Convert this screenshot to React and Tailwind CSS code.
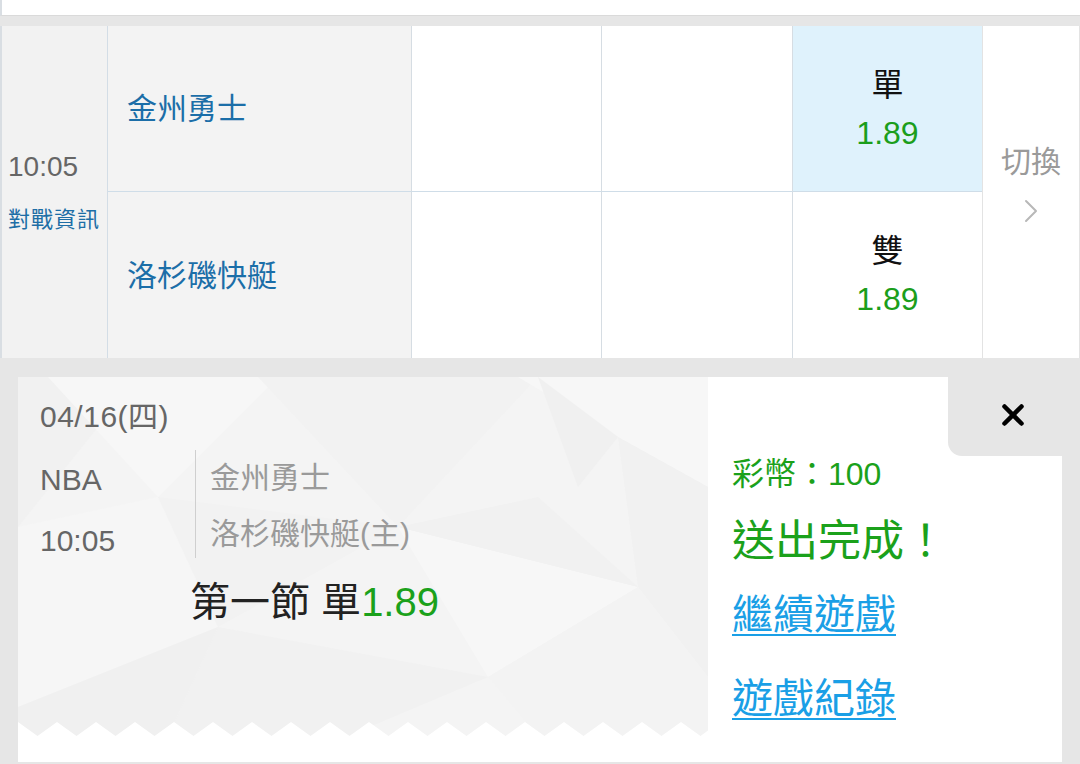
import { X } from 'lucide-react'

const FONT = { fontFamily: '"Liberation Sans", "Noto Sans CJK TC", sans-serif' }

// zigzag edge along the bottom of the ticket stub
function Zigzag({ width = 690, period = 39, depth = 14 }) {
  const pts = [`0,${depth}`]
  for (let x = 0; x <= width + period; x += period) {
    pts.push(`${x},0`)
    pts.push(`${x + period / 2},${depth}`)
  }
  pts.push(`${width + period},${depth}`)
  return (
    <svg width={width} height={depth} className="absolute left-0 bottom-0 block">
      <polygon points={pts.join(' ')} fill="#ffffff" />
    </svg>
  )
}

// faint low-poly facets behind the ticket text
function Facets() {
  return (
    <svg width="690" height="359" className="absolute inset-0 block">
      <rect width="690" height="359" fill="#f4f4f4" />
      <polygon points="0,0 120,0 0,150" fill="#f1f1f1" />
      <polygon points="30,0 260,0 140,120" fill="#f7f7f7" />
      <polygon points="240,0 520,0 380,150" fill="#f2f2f2" />
      <polygon points="500,0 690,0 690,110 600,60" fill="#f7f7f7" />
      <polygon points="520,0 600,60 560,110" fill="#f0f0f0" />
      <polygon points="600,60 690,110 690,300 620,210" fill="#f1f1f1" />
      <polygon points="0,150 140,120 200,250 0,330" fill="#f6f6f6" />
      <polygon points="140,120 380,150 200,250" fill="#f2f2f2" />
      <polygon points="380,150 620,210 470,300" fill="#f7f7f7" />
      <polygon points="200,250 470,300 330,359 150,359" fill="#f1f1f1" />
      <polygon points="470,300 620,210 690,300 690,359 520,359" fill="#f3f3f3" />
      <polygon points="0,330 200,250 150,359 0,359" fill="#f0f0f0" />
      <polygon points="380,150 520,120 620,210" fill="#f1f1f1" />
    </svg>
  )
}

function Cell({ className = '', children }) {
  return <div className={`flex flex-col items-center justify-center ${className}`}>{children}</div>
}

export default function App() {
  return (
    <div className="w-[1080px] h-[764px] overflow-hidden bg-[#e6e6e6]" style={FONT}>
      {/* previous card edge */}
      <div className="h-4 bg-white border-l-2 border-[#d9dee3] border-b border-b-[#dadada]" />
      <div className="h-[10px]" />

      {/* match row */}
      <div className="grid grid-cols-[108px_303px_190px_191px_190px_1fr] grid-rows-[166px_166px] bg-white">
        <div className="row-span-2 flex flex-col justify-center bg-[#f2f2f2] border-l-2 border-r border-l-[#d9dee3] border-r-[#d3dde6] pl-[6px]">
          <div className="text-[28px] leading-[36px] text-[#666]">10:05</div>
          <div className="text-[22px] leading-[30px] text-[#1d6ea6] mt-[20px] tracking-[1px]">對戰資訊</div>
        </div>
        <div className="flex items-center pl-[19px] bg-[#f3f3f3] border-b border-[#cfdde8] text-[30px] text-[#1b6ea8]">金州勇士</div>
        <div className="border-l border-b border-l-[#d6dde3] border-b-[#cfdde8]" />
        <div className="border-l border-b border-l-[#d6dde3] border-b-[#cfdde8]" />
        <Cell className="bg-[#dff2fc] border-l border-b border-l-[#d6dde3] border-b-[#cfdde8]">
          <div className="text-[32px] leading-[44px] text-[#111]">單</div>
          <div className="text-[32px] leading-[44px] text-[#1b9e1b] mt-[4px]">1.89</div>
        </Cell>
        <Cell className="row-span-2 border-l border-r border-[#e3e3e3] pb-[20px]">
          <div className="text-[30px] leading-[40px] text-[#9a9a9a]">切換</div>
          <svg width="14" height="24" viewBox="0 0 14 24" className="mt-[17px] block">
            <path d="M2 2 L12 12 L2 22" fill="none" stroke="#b8b8b8" strokeWidth="2" strokeLinecap="round" strokeLinejoin="round" />
          </svg>
        </Cell>
        <div className="flex items-center pl-[19px] bg-[#f3f3f3] text-[30px] text-[#1b6ea8]">洛杉磯快艇</div>
        <div className="border-l border-[#d6dde3]" />
        <div className="border-l border-[#d6dde3]" />
        <Cell className="border-l border-[#d6dde3]">
          <div className="text-[32px] leading-[44px] text-[#111]">雙</div>
          <div className="text-[32px] leading-[44px] text-[#1b9e1b] mt-[4px]">1.89</div>
        </Cell>
      </div>

      {/* bet slip */}
      <div className="mx-[18px] mt-[19px] h-[385px] flex">
        <div className="w-[690px] flex flex-col">
          <div className="relative h-[359px] overflow-hidden">
            <Facets />
            <div className="relative pl-[22px] pt-[20px]">
              <div className="text-[30px] leading-[40px] text-[#666] tracking-[0.5px]">04/16(四)</div>
              <div className="flex mt-[13px]">
                <div className="w-[155px] text-[30px] leading-[40px] text-[#666]">
                  <div className="mt-[10px]">NBA</div>
                  <div className="mt-[21px]">10:05</div>
                </div>
                <div className="h-[108px] border-l border-[#cfcfcf] pl-[14px] text-[30px] leading-[40px] text-[#9a9a9a]">
                  <div className="mt-[8px]">金州勇士</div>
                  <div className="mt-[16px]">洛杉磯快艇(主)</div>
                </div>
              </div>
              <div className="ml-[150px] mt-[17px] text-[40px] leading-[48px] text-[#222]">
                第一節 單<span className="text-[#1ba11b]">1.89</span>
              </div>
            </div>
            <Zigzag />
          </div>
          <div className="flex-1 bg-white" />
        </div>

        <div className="relative flex-1 bg-white pl-[24px] pt-[78px]">
          <div className="absolute right-0 top-0 w-[114px] h-[79px] bg-[#e6e6e6] rounded-bl-[14px] flex items-center justify-center pl-[16px] pb-[4px]">
            <X className="w-[34px] h-[34px] text-black" strokeWidth={3.2} />
          </div>
          <div className="text-[32px] leading-[38px] text-[#1ba11b]">彩幣：100</div>
          <div className="text-[43px] leading-[52px] text-[#1ba11b] mt-[22px]">送出完成！</div>
          <div className="text-[41px] leading-[50px] text-[#1a9fe6] underline underline-offset-[5px] decoration-2 mt-[23px]">繼續遊戲</div>
          <div className="text-[41px] leading-[50px] text-[#1a9fe6] underline underline-offset-[5px] decoration-2 mt-[34px]">遊戲紀錄</div>
        </div>
      </div>
    </div>
  )
}
